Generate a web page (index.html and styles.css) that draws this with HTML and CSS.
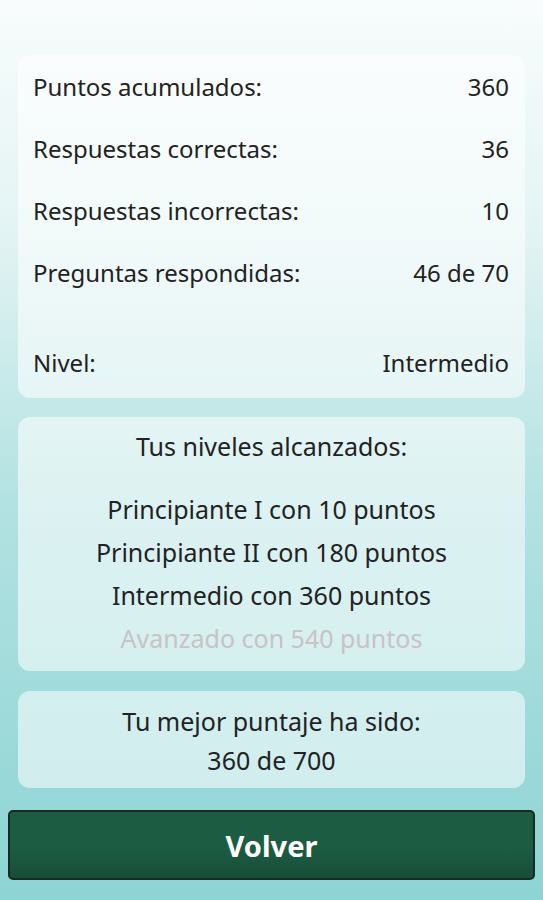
FILE: index.html
```html
<!DOCTYPE html>
<html lang="es">
<head>
    <meta charset="UTF-8">
    <meta name="viewport" content="width=device-width, initial-scale=1.0">
    <title>Resultados</title>
    <link rel="stylesheet" href="styles.css">
</head>
<body>

<div class="screen">
    <div class="card stats">
        <div class="row"><span>Puntos acumulados:</span><span>360</span></div>
        <div class="row"><span>Respuestas correctas:</span><span>36</span></div>
        <div class="row"><span>Respuestas incorrectas:</span><span>10</span></div>
        <div class="row"><span>Preguntas respondidas:</span><span>46 de 70</span></div>
        <div class="row level"><span>Nivel:</span><span>Intermedio</span></div>
    </div>

    <div class="card levels">
        <p class="levels-title">Tus niveles alcanzados:</p>
        <p>Principiante I con 10 puntos</p>
        <p>Principiante II con 180 puntos</p>
        <p>Intermedio con 360 puntos</p>
        <p class="locked">Avanzado con 540 puntos</p>
    </div>

    <div class="card best">
        <p>Tu mejor puntaje ha sido:</p>
        <p>360 de 700</p>
    </div>

    <button class="button">Volver</button>
</div>

</body>
</html>
```

FILE: styles.css
```css
body {
    margin: 0;
    height: 900px;
    background: linear-gradient(to bottom, #f8fcfc 0%, #e4f4f4 25%, #b4e2e2 55%, #8dd4d4 100%);
    color: #222;
    font-family: "Noto Sans", sans-serif;
    font-size: 24px;
}
.screen {
    display: flex;
    flex-direction: column;
    padding-top: 55px;
}
.card {
    margin: 0 18px;
    background-color: rgba(255, 255, 255, 0.55);
    border-radius: 12px;
}
.card p {
    margin: 0;
}
.stats {
    padding: 1px 16px 4px 15px;
}
.row {
    display: flex;
    justify-content: space-between;
    line-height: 62px;
}
.row.level {
    margin-top: 28px;
}
.levels {
    margin-top: 19px;
    padding: 8px 0 11px;
    text-align: center;
    font-size: 25px;
    line-height: 43px;
}
.levels-title {
    margin-bottom: 20px !important;
}
.locked {
    color: #c9c2c6;
}
.best {
    margin-top: 20px;
    padding: 11px 0 8px;
    text-align: center;
    font-size: 25px;
    line-height: 39px;
}
.button {
    margin: 22px 8px 0;
    height: 70px;
    font-family: "Noto Sans", sans-serif;
    font-size: 29px;
    font-weight: bold;
    color: white;
    background: linear-gradient(to bottom, #1c5c42 0%, #1c5c42 55%, #174e37 100%);
    border: 2px solid #1a2a22;
    border-radius: 5px;
    cursor: pointer;
}
```
